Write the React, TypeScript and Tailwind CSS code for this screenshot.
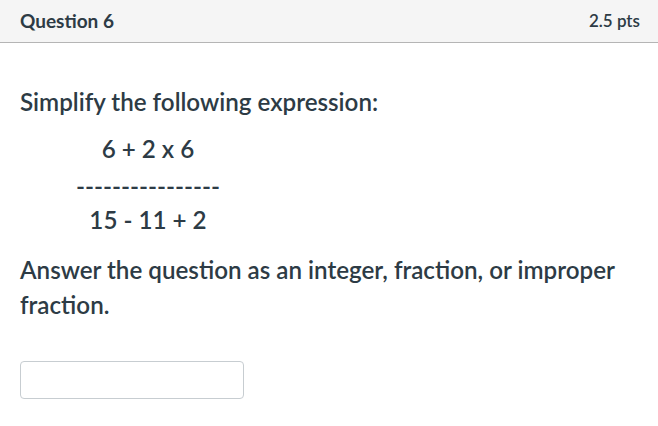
export default function App() {
  return (
    <div className="w-[658px] h-[426px] bg-white font-['Lato',sans-serif] text-[#2d3b45] overflow-hidden">
      <div className="h-[43px] bg-[#f5f5f5] border-b border-[#b5b5b5] flex items-center justify-between px-5 pr-[18px]">
        <span className="text-[19px] font-bold">Question 6</span>
        <span className="text-[17px] font-semibold text-[#2d3b45]">2.5 pts</span>
      </div>
      <div className="px-5 pt-[41px] text-[24.2px] font-semibold leading-[35px]">
        <p>Simplify the following expression:</p>
        <div className="w-[256px] text-center mt-[12px]">
          <p>6 + 2 x 6</p>
          <p className="mt-[2px]">----------------</p>
          <p className="-mt-[1px]">15 - 11 + 2</p>
        </div>
        <p className="mt-[15px]">
          Answer the question as an integer, fraction, or improper fraction.
        </p>
        <div className="mt-[39px] w-[224px] h-[38px] border border-[#c7cdd1] rounded-[4px] bg-white"></div>
      </div>
    </div>
  );
}
